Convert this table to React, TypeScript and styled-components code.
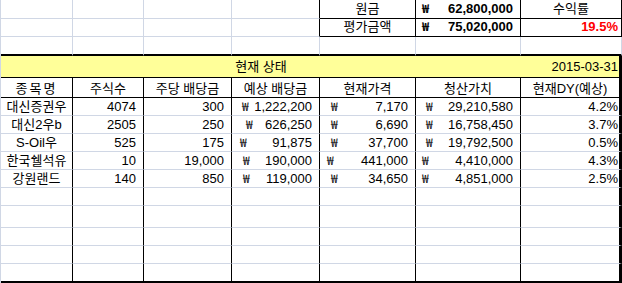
import React from 'react';
import styled, { createGlobalStyle } from 'styled-components';

const GRID = '#d0d7e5';
const INK = '#000000';
const YELLOW = '#ffff99';

const Global = createGlobalStyle`
  html, body { margin: 0; padding: 0; background: #ffffff; }
  body {
    font-family: "Liberation Sans", "Noto Sans CJK KR", sans-serif;
    font-size: 13px;
    color: #000000;
  }
`;

type Edge = 'grid' | 'ink' | 'thick' | 'heavy' | 'none';
const edge = (e: Edge) =>
  e === 'ink'
    ? `1px solid ${INK}`
    : e === 'thick'
    ? `2px solid ${INK}`
    : e === 'heavy'
    ? `3px solid ${INK}`
    : e === 'none'
    ? '0'
    : `1px solid ${GRID}`;

const Sheet = styled.div`
  width: 622px;
  height: 283px;
  box-sizing: border-box;
  border-left: 1px solid ${GRID};
  display: flex;
  flex-direction: column;
`;

const Row = styled.div<{ $h: number; $bg?: string }>`
  display: grid;
  grid-template-columns: 72px 71px 88px 88px 96px 105px 101px;
  height: ${(p) => p.$h}px;
  flex: none;
  background: ${(p) => p.$bg ?? 'transparent'};
`;

type Align = 'left' | 'center' | 'right' | 'split';

const Cell = styled.div<{
  $r?: Edge;
  $b?: Edge;
  $align?: Align;
  $pb?: number;
  $pr?: number;
  $span?: number;
  $bold?: boolean;
  $color?: string;
  $spread?: number;
}>`
  box-sizing: border-box;
  min-width: 0;
  grid-column: span ${(p) => p.$span ?? 1};
  border-right: ${(p) => edge(p.$r ?? 'grid')};
  border-bottom: ${(p) => edge(p.$b ?? 'grid')};
  display: flex;
  align-items: flex-end;
  justify-content: ${(p) =>
    p.$align === 'right'
      ? 'flex-end'
      : p.$align === 'split'
      ? 'space-between'
      : p.$align === 'left'
      ? 'flex-start'
      : 'center'};
  padding: 0 ${(p) => (p.$align === 'center' || !p.$align ? 0 : p.$pr ?? 7)}px
    ${(p) => p.$pb ?? 2}px 0;
  line-height: 13px;
  white-space: nowrap;
  font-weight: ${(p) => (p.$bold ? 700 : 400)};
  color: ${(p) => p.$color ?? 'inherit'};
  letter-spacing: ${(p) => p.$spread ?? 0}px;
`;

const Won = styled.span<{ $indent: number }>`
  margin-left: ${(p) => p.$indent}px;
  margin-bottom: 1px;
  font-family: "Noto Sans CJK KR", sans-serif;
  font-size: 12px;
`;

const Amount = styled.span``;

type Stock = {
  name: string;
  shares: string;
  dps: string;
  exp: string;
  expW: number;
  price: string;
  priceW: number;
  value: string;
  valueW: number;
  dy: string;
};

const stocks: Stock[] = [
  { name: '대신증권우', shares: '4074', dps: '300', exp: '1,222,200', expW: 10, price: '7,170', priceW: 11, value: '29,210,580', valueW: 10, dy: '4.2%' },
  { name: '대신2우b', shares: '2505', dps: '250', exp: '626,250', expW: 14, price: '6,690', priceW: 11, value: '16,758,450', valueW: 10, dy: '3.7%' },
  { name: 'S-Oil우', shares: '525', dps: '175', exp: '91,875', expW: 8, price: '37,700', priceW: 11, value: '19,792,500', valueW: 10, dy: '0.5%' },
  { name: '한국쉘석유', shares: '10', dps: '19,000', exp: '190,000', expW: 11, price: '441,000', priceW: 7, value: '4,410,000', valueW: 6, dy: '4.3%' },
  { name: '강원랜드', shares: '140', dps: '850', exp: '119,000', expW: 11, price: '34,650', priceW: 11, value: '4,851,000', valueW: 6, dy: '2.5%' },
];

const headers = ['종목명', '주식수', '주당 배당금', '예상 배당금', '현재가격', '청산가치', '현재DY(예상)'];

const Money: React.FC<{ indent: number; value: string; bold?: boolean; r?: Edge; b?: Edge; pb?: number }> = ({
  indent,
  value,
  bold,
  r = 'ink',
  b = 'grid',
  pb,
}) => (
  <Cell $align="split" $r={r} $b={b} $bold={bold} $pb={pb}>
    <Won $indent={indent}>₩</Won>
    <Amount>{value}</Amount>
  </Cell>
);

const SummaryRow: React.FC<{ h: number; pb: number; label: string; amount: string; last: React.ReactNode }> = ({
  h,
  pb,
  label,
  amount,
  last,
}) => (
  <Row $h={h}>
    <Cell $pb={pb} />
    <Cell $pb={pb} />
    <Cell $pb={pb} />
    <Cell $r="ink" $pb={pb} />
    <Cell $r="ink" $b="ink" $pb={pb}>
      {label}
    </Cell>
    <Money indent={6} value={amount} bold b="ink" pb={pb} />
    {last}
  </Row>
);

const EmptyRow: React.FC<{ h: number; bottom?: Edge }> = ({ h, bottom = 'grid' }) => (
  <Row $h={h}>
    {[0, 1, 2, 3, 4, 5].map((i) => (
      <Cell key={i} $r="ink" $b={bottom} />
    ))}
    <Cell $r="heavy" $b={bottom} />
  </Row>
);

export default function App() {
  return (
    <>
      <Global />
      <Sheet>
        <SummaryRow
          h={19}
          pb={3}
          label="원금"
          amount="62,800,000"
          last={
            <Cell $r="ink" $b="ink" $pb={3}>
              수익률
            </Cell>
          }
        />
        <SummaryRow
          h={18}
          pb={3}
          label="평가금액"
          amount="75,020,000"
          last={
            <Cell $r="ink" $b="ink" $align="right" $pr={3} $bold $color="#ff0000" $pb={3}>
              19.5%
            </Cell>
          }
        />
        <Row $h={19}>
          {[0, 1, 2, 3, 4, 5, 6].map((i) => (
            <Cell key={i} $b="thick" />
          ))}
        </Row>

        <Row $h={22} $bg={YELLOW}>
          <Cell $span={6} $r="none" $b="ink" $pb={4}>
            현재 상태
          </Cell>
          <Cell $align="right" $pr={1} $r="heavy" $b="ink" $pb={4}>
            2015-03-31
          </Cell>
        </Row>

        <Row $h={20}>
          {headers.map((h, i) => (
            <Cell key={h} $r={i === 6 ? 'heavy' : 'ink'} $b="ink" $pb={2} $spread={i === 0 ? 2 : 0}>
              {h}
            </Cell>
          ))}
        </Row>

        {stocks.map((s) => (
          <Row $h={18} key={s.name}>
            <Cell $r="ink">{s.name}</Cell>
            <Cell $r="ink" $align="right">
              {s.shares}
            </Cell>
            <Cell $r="ink" $align="right">
              {s.dps}
            </Cell>
            <Money indent={s.expW} value={s.exp} />
            <Money indent={s.priceW} value={s.price} />
            <Money indent={s.valueW} value={s.value} />
            <Cell $r="heavy" $align="right" $pr={1}>
              {s.dy}
            </Cell>
          </Row>
        ))}

        <EmptyRow h={18} />
        <EmptyRow h={22} />
        <EmptyRow h={18} />
        <EmptyRow h={18} />
        <EmptyRow h={19} bottom="thick" />
      </Sheet>
    </>
  );
}
